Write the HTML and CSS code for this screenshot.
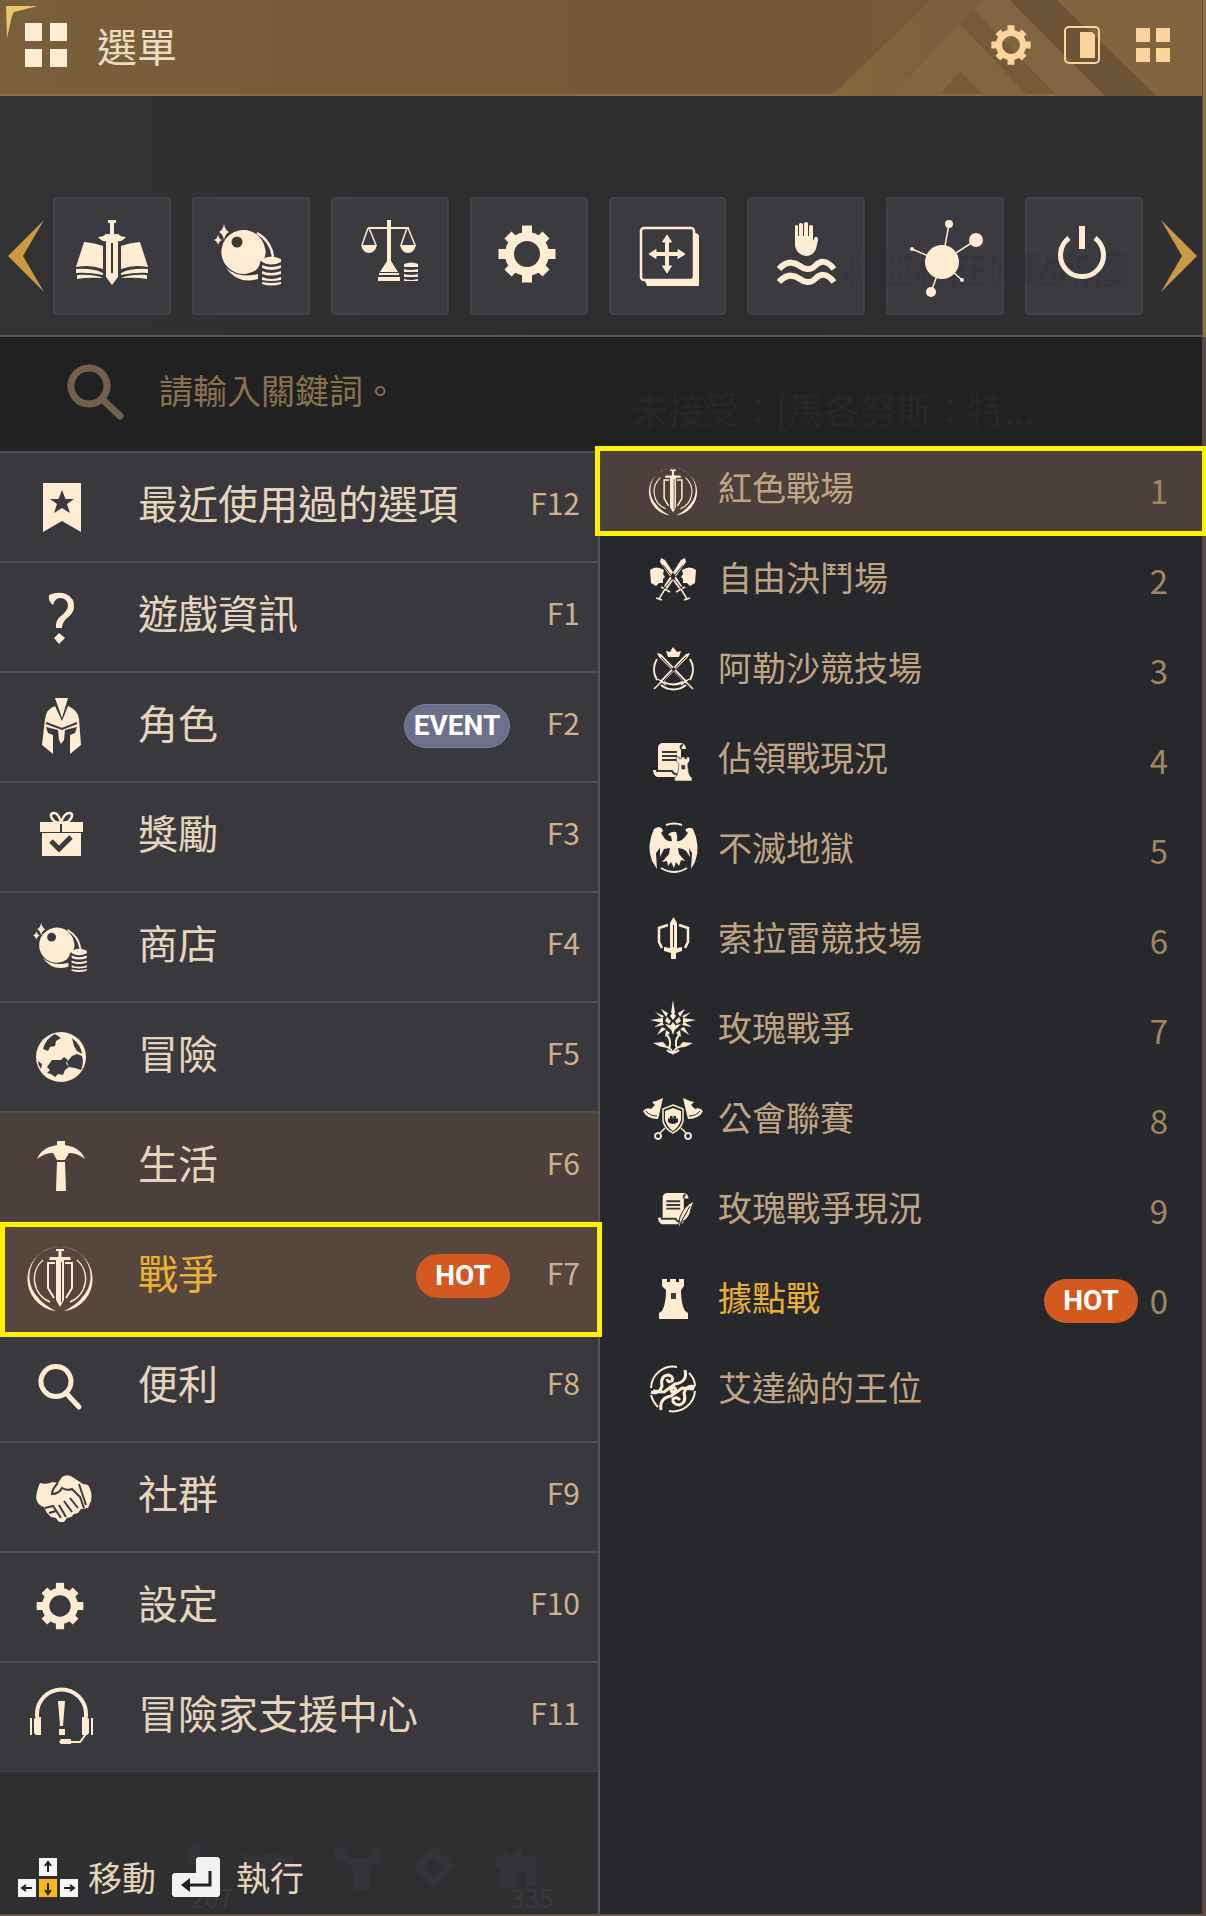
FILE: index.html
```html
<!doctype html>
<html lang="zh-Hant">
    <head>
        <meta charset="utf-8">
        <title>選單</title>
        <meta name="viewport" content="width=device-width, initial-scale=1">
        <link rel="stylesheet" href="styles.css">
    </head>
    <body>
        <svg class="defs" aria-hidden="true">
            <defs>
                <linearGradient id="BAND" x1="0" x2="1">
                    <stop offset="0%" stop-color="#8a6a3e"/>
                    <stop offset="60%" stop-color="#7a603c"/>
                </linearGradient>
                <g id="gear">
                    <circle r="17.5" fill="none" stroke="currentColor" stroke-width="9"/>
                    <path fill="none" stroke="currentColor" stroke-width="10" d="M0-28.5V-19M0 19V28.5M-28.5 0H-19M19 0H28.5M-19-19L-14-14M19-19L14-14M-19 19L-14 14M19 19L14 14"/>
                </g>
                <g id="orb">
                    <path d="M9 1Q10 7 14 9Q10 11 9 17Q8 11 4 9Q8 7 9 1ZM3 12Q4 16 7 17Q4 18 3 22Q2 18-1 17Q2 16 3 12Z"/>
                    <path d="M29.5 7A22 22 0 0 1 50 25Q52 32 48 37L45 39Q45 43 41 47A22 22 0 1 1 29.5 7Z"/>
                    <circle class="cut" cx="22" cy="19" r="5.5"/>
                    <path fill="none" stroke="currentColor" stroke-width="2.5" d="M42 10Q56 18 58 34"/>
                    <path d="M11 45Q24 56 43 51V56Q23 62 11 45Z"/>
                    <use href="#coins" x="47" y="34"/>
                </g>
                <g id="coins">
                    <path d="M0 2Q9-3 19 2V5Q9 10 0 5ZM0 8Q9 12 19 8V11Q9 15 0 11ZM0 14Q9 18 19 14V17Q9 20 0 17ZM0 20Q9 24 19 20V23Q9 25 0 23ZM0 25Q9 27 19 25V27Q9 30 0 27Z"/>
                </g>
                <g id="war">
                    <path d="M0-31A32.1 32.1 0 0 1 4 33Q17 27 24 17A29.5 29.5 0 0 0 0-31ZM0-31A32.1 32.1 0 0 0-4 33Q-17 27-24 17A29.5 29.5 0 0 1 0-31Z"/>
                    <path fill="none" stroke="currentColor" stroke-width="1.5" d="M17-18A25 25 0 0 1 10 24M-17-18A25 25 0 0 0-10 24"/>
                    <path fill="none" stroke="currentColor" stroke-width="2" d="M-5-15H-12V10L-6 20M5-15H12V10L6 20"/>
                    <path d="M-4-29H4V-27H1.5V-21H10L11-18H4V22L0 29L-4 22V-18H-11L-10-21H-1.5V-27H-4Z"/>
                    <path class="slot thin" d="M1.5-16V24"/>
                </g>
                <g id="tower">
                    <path d="M4 0H9V3H12V0H18V3H21V0H26V7L23 11Q23 25 27 32L30 34V40H1V34L4 32Q8 25 8 11L4 7Z"/>
                    <path class="cut" d="M13 14H18V20H13Z"/>
                </g>
                <g id="scroll">
                    <path d="M8 0H27Q32 1 32 6H27V30Q27 34 22 34H3Q-1 32-1 27H4V5Q4 1 8 0Z"/>
                    <path class="line" d="M8 9H23M8 13H23M8 17H23M2 28H18Q20 32 24 31M27 6Q26 2 29 2"/>
                </g>
                <g id="crossed">
                    <path d="M-12-22L-8-20L9 6L6 9L-13-18ZM12-22L8-20L-9 6L-6 9L13-18Z"/>
                    <path fill="none" stroke="currentColor" stroke-width="1.5" d="M3 12L12 7M8 9L14 19M11 20L17 18M-3 12L-12 7M-8 9L-14 19M-11 20L-17 18"/>
                </g>
            </defs>
        </svg>

        <main class="menu">
            <header class="bar">
                <svg class="chevrons" viewBox="0 0 403 96" preserveAspectRatio="xMaxYMin slice" aria-hidden="true">
                    <path fill="url(#BAND)" d="M33 96L131 0H185L175 10L92 96Z"/>
                    <path fill="#816642" d="M92 96L161 24L229 96H185L161 71L140 96Z"/>
                    <path fill="#806643" d="M175 10L185 0H211L306 96H258Z"/>
                    <path fill="#6c5436" d="M211 0H258L358 96H306Z"/>
                    <path fill="#80653f" d="M258 0H403V96H358Z"/>
                </svg>
                <svg class="corner" viewBox="0 0 34 34" aria-hidden="true"><path d="M0 0H32L8 6L6 10L1 32Z"/></svg>
                <svg class="logo" viewBox="0 0 42 44" aria-hidden="true"><path d="M0 0H17V18H0ZM25 0H42V18H25ZM0 26H17V44H0ZM25 26H42V44H25Z"/></svg>
                <h1>選單</h1>
                <div class="tools">
                    <button aria-label="設定"><svg viewBox="-29 -29 58 58"><use href="#gear"/></svg></button>
                    <button aria-label="面板"><svg viewBox="0 0 40 40"><rect x="3" y="2" width="34" height="36" rx="4" fill="none" stroke="currentColor" stroke-width="2"/><path d="M18 7H30L33 10V33H18Z"/></svg></button>
                    <button aria-label="方格"><svg viewBox="0 0 40 40"><path d="M3 3H17V17H3ZM23 3H37V17H23ZM3 23H17V37H3ZM23 23H37V37H23Z"/></svg></button>
                </div>
            </header>

            <section class="quick">
                <button class="arrow" aria-label="上一頁"><svg viewBox="0 0 36 72"><path d="M36 0L15 36L36 72L0 36Z"/></svg></button>
                <div class="tiles">
                    <button class="tile" aria-label="任務"><svg viewBox="0 0 80 80"><g transform="translate(3 3)">
                        <path d="M9 23Q20 24 28 27V50Q15 45 1 48ZM65 23Q54 24 46 27V50Q59 45 73 48ZM1 50Q18 49 28 54V56Q12 53 1 54ZM73 50Q56 49 46 54V56Q62 53 73 54ZM2 56Q18 55 28 59Q12 58 2 60ZM72 56Q56 55 46 59Q62 58 72 60Z"/>
                        <path d="M33 1H41V4H39V15H43Q46 18 51 18Q47 23 43 22V58L37 66L31 58V22Q27 23 23 18Q28 18 31 15H35V4H33Z"/>
                        <path class="slot" d="M37 24V54"/>
                    </g></svg></button>
                    <button class="tile" aria-label="珍珠商店"><svg viewBox="0 0 80 80"><use href="#orb" x="4" y="7"/></svg></button>
                    <button class="tile" aria-label="交易所"><svg viewBox="0 0 80 80"><g transform="translate(10 3)">
                        <path d="M27 1H31V8H49V10H31V42L38 53H20L27 42V10H8V8H27ZM19 54H39V56H19ZM18 58H40V62H18ZM1 26H17Q15 34 9 34Q3 34 1 26ZM40 26H56Q54 34 48 34Q42 34 40 26Z"/>
                        <path fill="none" stroke="currentColor" stroke-width="1.5" d="M8 9L2 26M9 9L16 26M47 9L41 26M48 9L55 26"/>
                        <path d="M44 45Q51 42 58 45V48H44ZM44 50Q51 52 58 50V53H44ZM44 55Q51 57 58 55V58H44ZM44 60Q51 62 58 60V62H44Z"/>
                    </g></svg></button>
                    <button class="tile" aria-label="設定"><svg viewBox="0 0 80 80"><use href="#gear" x="38" y="38"/></svg></button>
                    <button class="tile" aria-label="編輯介面"><svg viewBox="0 0 80 80"><g transform="translate(12 10)">
                        <rect x="2" y="2" width="53" height="52" rx="3" fill="none" stroke="currentColor" stroke-width="2.5"/>
                        <path d="M55 7H57L60 9V60H8L6 55H53Q55 55 55 53Z"/>
                        <path d="M26.5 26.5V16H23.5L28 9L32.5 16H29.5V26.5H39V23.5L46 28L39 32.5V29.5H29.5V40H32.5L28 47L23.5 40H26.5V29.5H17V32.5L10 28L17 23.5V26.5Z" stroke="currentColor"/>
                    </g></svg></button>
                    <button class="tile" aria-label="脫離"><svg viewBox="0 0 80 80"><g transform="translate(12 5)">
                        <path d="M17 5Q18.5 3 20 5V15H21V3Q23 1 25 3V15H26V2Q28 0 30 2V15H31V5Q33 3 35 5V20L37 16Q40 15 40 19L38 28Q35 35 28 35Q19 34 17 25Z"/>
                        <path fill="none" stroke="currentColor" stroke-width="6" d="M1 48C10 38 18 42 22 45S32 50 37 45 48 38 56 48M1 61C10 51 18 55 22 58S32 63 37 58 48 51 56 61"/>
                    </g></svg></button>
                    <button class="tile" aria-label="知識"><svg viewBox="0 0 80 80"><g transform="translate(4 3)">
                        <path fill="none" stroke="currentColor" stroke-width="1.5" d="M33 43L67 21M33 43L40 5M33 43L3 30M33 43L22 73M33 43L53 61"/>
                        <circle cx="33" cy="43" r="17"/><circle cx="67" cy="21" r="7"/><circle cx="40" cy="5" r="4"/><circle cx="3" cy="30" r="2"/><circle cx="22" cy="73" r="5"/><circle cx="53" cy="61" r="2"/>
                    </g></svg></button>
                    <button class="tile" aria-label="結束遊戲"><svg viewBox="0 0 80 80"><g transform="translate(13 9)">
                        <path fill="none" stroke="currentColor" stroke-width="5" d="M12 13A21.5 21.5 0 1 0 38 13"/>
                        <path d="M22 1H28V24H22Z"/>
                    </g></svg></button>
                </div>
                <button class="arrow" aria-label="下一頁"><svg viewBox="0 0 36 72"><path d="M0 0L21 36L0 72L36 36Z"/></svg></button>
                <span class="ghost ghost-place" aria-hidden="true">利亞村莊據點所屬</span>
            </section>

            <form class="search">
                <span class="ghost ghost-quest" aria-hidden="true">未接受：[馬各努斯：特...</span>
                <label for="keyword" aria-label="搜尋"><svg viewBox="0 0 56 56"><path fill="none" stroke="currentColor" stroke-width="7" stroke-linecap="round" d="M21 4A18 18 0 1 1 20.9 4M34 35L52 52"/></svg></label>
                <input id="keyword" type="text" placeholder="請輸入關鍵詞。">
            </form>

            <div class="columns">
                <nav class="left">
                    <ul class="groups">
                        <li><button class="group"><svg class="icon" viewBox="0 0 64 64"><path d="M15 9H53V58L34 47L15 58Z"/><path class="cut" d="M34 16L37.5 25H46L39 30L42 39L34 34L26 39L29 30L22 25H30.5Z"/></svg><span class="name">最近使用過的選項</span><kbd>F12</kbd></button></li>
                        <li><button class="group"><svg class="icon" viewBox="0 0 64 64"><path d="M21 11Q30 7 38 10Q47 14 46 24Q45 30 38 35Q34 39 34 44H28Q27 36 34 31Q40 26 40 21Q39 14 32 14Q27 14 25 21Q20 17 21 11ZM31 49L37 54L31 60L26 54Z"/></svg><span class="name">遊戲資訊</span><kbd>F1</kbd></button></li>
                        <li><button class="group"><svg class="icon" viewBox="0 0 64 64"><path d="M27 4H40L34 24ZM14 51L17 25Q18 15 27 12L34 27L40 12Q50 16 51 25L53 51L42 60V41L47 39L49 33L37 36L36 46L33 50L31 46L30 36L18 33L20 39L25 41V60Z"/><path class="line" d="M18 29L34 35L49 29"/></svg><span class="name">角色</span><b class="badge event">EVENT</b><kbd>F2</kbd></button></li>
                        <li><button class="group"><svg class="icon" viewBox="0 0 64 64"><path d="M12 18H55V28H12ZM14 29H53V52H14Z"/><path fill="none" stroke="currentColor" stroke-width="2.5" d="M33 19L27 18Q20 11 25 9Q30 8 33 18Q37 8 42 9Q47 11 40 18Z"/><path class="slot" d="M33 20V28"/><path class="line thick" d="M23 37L31 45L43 33"/></svg><span class="name">獎勵</span><kbd>F3</kbd></button></li>
                        <li><button class="group"><svg class="icon" viewBox="0 0 64 64"><g transform="translate(6 8) scale(.8)"><use href="#orb"/></g></svg><span class="name">商店</span><kbd>F4</kbd></button></li>
                        <li><button class="group"><svg class="icon" viewBox="0 0 64 64"><circle cx="33" cy="33" r="25"/><path class="cut" d="M27 10L33 14L28 17L27 22L22 23L20 27L15 25Q18 14 27 10ZM44 14Q53 21 54 30L49 27L46 22ZM33 36L36 33L40 36L38 39L41 43L37 46L35 51L30 50L27 53L23 50L19 49L22 46L19 43L24 36ZM39 38L44 32L49 30L54 32Q56 39 53 46L47 44L41 43ZM10 37L14 40L13 45Q10 41 10 37Z"/></svg><span class="name">冒險</span><kbd>F5</kbd></button></li>
                        <li><button class="group open"><svg class="icon" viewBox="0 0 64 64"><path d="M29 7H37V11L45 13Q54 17 57 25Q48 18 41 19L37 26H29L25 19Q18 18 9 25Q12 17 21 13L29 11ZM29 28H37L38 57H28Z"/></svg><span class="name">生活</span><kbd>F6</kbd></button></li>
                        <li><button class="group current"><svg class="icon" viewBox="0 0 64 64"><use href="#war" x="32" y="34"/></svg><span class="name">戰爭</span><b class="badge hot">HOT</b><kbd>F7</kbd></button></li>
                        <li><button class="group"><svg class="icon" viewBox="0 0 64 64"><path fill="none" stroke="currentColor" stroke-width="5" stroke-linecap="round" d="M28 12.5A15 15 0 1 1 27.9 12.5M38 39L51 53"/></svg><span class="name">便利</span><kbd>F8</kbd></button></li>
                        <li><button class="group"><svg class="icon" viewBox="0 0 64 64"><g transform="translate(0 -3)"><path d="M8 37Q9 28 12 22Q18 24 25 21L30 22L34 16Q40 12 46 17L55 23L60 24Q65 32 63 40L60 47L53 48L50 52L46 53L43 56L39 57L36 61L31 61L28 57L23 56L19 52L16 46Q10 45 8 37Z"/><path class="line" d="M30 22Q24 28 24 33Q31 33 34 27Q39 30 44 28L52 36L56 47M42 37L50 47M36 40L44 51M31 44L38 56M17 47L25 45L33 57M21 52L28 50M51 23L58 44"/></g></svg><span class="name">社群</span><kbd>F9</kbd></button></li>
                        <li><button class="group"><svg class="icon" viewBox="0 0 64 64"><g transform="translate(32 32) scale(.82)"><use href="#gear"/></g></svg><span class="name">設定</span><kbd>F10</kbd></button></li>
                        <li><button class="group"><svg class="icon" viewBox="0 0 64 64"><path fill="none" stroke="currentColor" stroke-width="4" d="M9 33V30A24.5 24.5 0 0 1 58 30V33"/><path fill="none" stroke="currentColor" stroke-width="2" d="M3 34V51M64 34V51M58 50L52 58H40"/><path d="M8 33H13V51H8L6 49V35ZM59 33H54V51H59L61 49V35ZM30 17H37L35 42H32ZM31 45H37V51H31ZM33 55H43V60H33L31 58Z"/></svg><span class="name">冒險家支援中心</span><kbd>F11</kbd></button></li>
                    </ul>
                    <footer class="hints">
                        <svg class="ghost-icons" viewBox="0 0 364 60" aria-hidden="true">
                            <path d="M8 20Q4 4 15 2Q26 6 18 16L26 28ZM66 22L60 10L74 16Q90 8 106 16L118 10L112 24Q110 36 90 36Q72 36 66 22ZM153 6L163 4L169 16H187L193 4L199 8L200 20L189 24V48H173V24L155 18ZM233 26L254 4L275 24L254 46ZM243 26L254 36L264 25L254 15ZM330 14Q318 2 324 14H316V26H320V46H336V30H346V44H356V14H342Q346 2 330 14Z"/>
                        </svg>
                        <span class="ghost ghost-a" aria-hidden="true">207</span>
                        <span class="ghost ghost-b" aria-hidden="true">335</span>
                        <svg class="arrows" viewBox="0 0 60 39" aria-hidden="true"><path fill="#f5f5f5" d="M21 0H39V18H21ZM0 21H18V39H0ZM42 21H60V39H42Z"/><path fill="#fcb817" d="M21 21H39V39H21Z"/><path fill="none" stroke="#222" stroke-width="2" d="M30 14V5M27 8L30 4L33 8M14 30H5M8 27L4 30L8 33M46 30H55M52 27L56 30L52 33M30 25V34M27 32L30 36L33 32"/></svg>
                        <span>移動</span>
                        <svg class="enter" viewBox="0 0 48 40" aria-hidden="true"><path fill="#f3f3f3" d="M26 0H46L48 2V38L46 40H2L0 38V18L2 16H24V2Z"/><path fill="none" stroke="#222" stroke-width="3" d="M38 14V28H14"/><path fill="#222" d="M18 21V35L9 28Z"/></svg>
                        <span>執行</span>
                    </footer>
                </nav>

                <ul class="entries">
                    <li><button class="entry selected"><svg class="icon" viewBox="0 0 64 64"><g transform="translate(32 32) scale(.74)"><use href="#war"/></g></svg><span class="name">紅色戰場</span><kbd>1</kbd></button></li>
                    <li><button class="entry"><svg class="icon" viewBox="0 0 64 64"><path d="M23 21Q15 16 9 21L10 34L15 37L18 34L22 34L22 30L24 28L22 25ZM41 21Q49 16 55 21L54 34L49 37L46 34L42 34L42 30L40 28L42 25Z"/><use href="#crossed" x="32" y="31"/><path class="line thin" d="M22 16L42 41M42 16L22 41"/></svg><span class="name">自由決鬥場</span><kbd>2</kbd></button></li>
                    <li><button class="entry"><svg class="icon" viewBox="0 0 64 64"><path fill="none" stroke="currentColor" stroke-width="2" d="M16 20A20 20 0 0 0 16 41M49 20A20 20 0 0 1 49 41M20 46A20 20 0 0 0 45 46M23 43Q32 48 42 43"/><path d="M25 12L29 13L32 8L36 13L40 12L38 18H27Z"/><path d="M16 14L20 15L46 42L44 44L18 18ZM49 14L45 15L19 42L21 44L47 18Z"/><path fill="none" stroke="currentColor" stroke-width="1.5" d="M40 46L48 40M45 43L52 50M25 46L17 40M20 43L13 50"/><path class="line thin" d="M20 18L43 42M45 18L22 42"/></svg><span class="name">阿勒沙競技場</span><kbd>3</kbd></button></li>
                    <li><button class="entry"><svg class="icon" viewBox="0 0 64 64"><use href="#scroll" x="13" y="14"/><g class="edge" transform="translate(33 28) scale(.6)"><use href="#tower"/></g></svg><span class="name">佔領戰現況</span><kbd>4</kbd></button></li>
                    <li><button class="entry"><svg class="icon" viewBox="0 0 64 64"><path d="M17 8Q21 8 22 12L20 14L24 20Q28 23 31 22L30 17L27 16Q30 12 35 13Q37 17 36 22Q40 23 43 19L47 14L44 11Q48 7 52 10Q60 27 54 43L50 50L51 34L48 29L49 38L45 32L42 30L37 29L38 35L44 42L40 41L38 47L35 43L33 49L30 43L27 47L26 42L21 43L28 35L29 29L23 30L19 38L19 29L15 34L16 50L11 42Q5 27 13 10Z"/><path fill="none" stroke="currentColor" stroke-width="2" d="M25 6Q33 3 41 6M20 49Q33 57 46 49"/></svg><span class="name">不滅地獄</span><kbd>5</kbd></button></li>
                    <li><button class="entry"><svg class="icon" viewBox="0 0 64 64"><path d="M32.5 8L36 14V39L41 38V42L35 44V50H30V44L23 42V38L29 39V14Z"/><path class="slot thin" d="M32.5 16V38"/><path fill="none" stroke="currentColor" stroke-width="2.5" d="M27 16L18 19V33L21 39M38 16L47 19V33L44 39"/></svg><span class="name">索拉雷競技場</span><kbd>6</kbd></button></li>
                    <li><button class="entry"><svg class="icon" viewBox="0 0 64 64"><path d="M32 1L34 14H30ZM9 21L22 19V24ZM55 21L42 19V24ZM20 10L27 14L25 18ZM44 10L37 14L39 18ZM14 13L23 17L21 19ZM50 13L41 17L43 19ZM13 28L21 23L23 26ZM51 28L43 23L41 26ZM16 36L21 28L25 30ZM48 36L43 28L39 30ZM24 38L25 31L29 34ZM40 38L39 31L35 34ZM32 13L35 17L32 21L29 17ZM26 18L30 22L28 25L24 22ZM38 18L34 22L36 25L40 22ZM24 25L29 26L30 31ZM40 25L35 26L34 31ZM32 23L35 27L32 36L29 27ZM12 44L22 43L25 46L20 48ZM52 44L42 43L39 46L44 48Z"/><path fill="none" stroke="currentColor" stroke-width="2" d="M26 36Q31 42 28 50M38 36Q33 42 36 50M21 47Q29 47 32 54Q35 47 43 47M26 51Q32 57 38 51"/></svg><span class="name">玫瑰戰爭</span><kbd>7</kbd></button></li>
                    <li><button class="entry"><svg class="icon" viewBox="0 0 64 64"><path d="M22 9L19 22L17 30Q6 30 2 22Q5 18 10 20L14 16L11 13L15 12ZM42 9L45 22L47 30Q58 30 62 22Q59 18 54 20L50 16L53 13L49 12ZM32 19L40 22V31Q38 38 32 42Q26 38 24 31V22Z"/><path class="line thin" d="M5 22Q9 27 16 27M59 22Q55 27 48 27"/><path fill="none" stroke="currentColor" stroke-width="1.5" d="M32 16L42 20V32Q40 40 32 44Q24 40 22 32V20ZM24 39L18 45M40 39L46 45"/><path fill="none" stroke="currentColor" stroke-width="2" d="M17 44A3 3 0 1 0 17.1 44M47 44A3 3 0 1 0 47.1 44"/><path class="cut" d="M27 29L29 30V27H31V30L32 26L33 30V27H35V30L37 29V33Q32 37 27 33Z"/></svg><span class="name">公會聯賽</span><kbd>8</kbd></button></li>
                    <li><button class="entry"><svg class="icon" viewBox="0 0 64 64"><g transform="translate(18 14) scale(.92)"><use href="#scroll"/></g><path class="edge" d="M53 22Q43 27 39 38L37 50L41 43Q49 39 50 30Z"/><path class="line thin" d="M49 27L39 45"/></svg><span class="name">玫瑰戰爭現況</span><kbd>9</kbd></button></li>
                    <li><button class="entry featured"><svg class="icon" viewBox="0 0 64 64"><use href="#tower" x="17" y="10"/></svg><span class="name">據點戰</span><b class="badge hot">HOT</b><kbd>0</kbd></button></li>
                    <li><button class="entry"><svg class="icon" viewBox="0 0 64 64"><g fill="none" stroke="currentColor" stroke-width="2"><path d="M36 8A22 22 0 0 0 10 29M28 52A22 22 0 0 0 54 32M48 14Q54 20 54 27M10 36Q12 43 17 48"/><path stroke-width="3" d="M10 33Q18 36 21 27Q19 17 27 16Q33 17 31 22Q27 24 26 20M54 28Q46 25 43 34Q46 44 38 46Q31 45 32 40Q36 37 39 41M44 11Q47 23 34 25L23 33L12 32M20 51Q18 39 30 37L41 29L53 30M32 28Q29 31 31 33Q36 33 34 29Z"/></g></svg><span class="name">艾達納的王位</span><kbd></kbd></button></li>
                </ul>
            </div>
        </main>
    </body>
</html>
```

FILE: styles.css
```css
* {
	box-sizing: border-box;
}
body {
	margin: 0;
	background: linear-gradient(#92733f 0, #92733f 337px, #5c4a40 337px);
	color: #e6d5bd;
	font-family: "Noto Sans CJK TC", "Noto Sans", sans-serif;
	font-weight: 400;
}
ul {
	list-style: none;
	margin: 0;
	padding: 0;
}
button {
	border: 0;
	padding: 0;
	background: none;
	color: inherit;
	font: inherit;
	text-align: left;
	cursor: pointer;
}
svg {
	display: block;
	fill: currentColor;
	overflow: visible;
}
.defs {
	position: absolute;
	width: 0;
	height: 0;
}
.cut {
	fill: #3a393d;
}
.slot, .line {
	fill: none;
	stroke: #3a393d;
	stroke-width: 2px;
}
.thin {
	stroke-width: 1px;
}
.thick {
	stroke-width: 5px;
}
.edge {
	stroke: #27282c;
	stroke-width: 1px;
}

.menu {
	display: flex;
	flex-direction: column;
	min-height: 100vh;
	margin-right: 3px;
	border-right: 1px solid #4d4b4c;
	border-bottom: 2px solid #6a5046;
	background: #2f2f31;
}

/* title bar */
.bar {
	position: relative;
	display: flex;
	align-items: center;
	height: 96px;
	padding: 0 29px 4px 25px;
	border-bottom: 2px solid #8d6d45;
	background: linear-gradient(90deg, #795f3a, #715937 60%, #775d39);
	color: #ffecd3;
}
.chevrons {
	position: absolute;
	top: 0;
	right: 0;
	width: 403px;
	height: 94px;
}
.corner {
	position: absolute;
	top: 6px;
	left: 6px;
	width: 34px;
	color: #e9c66d;
}
.logo {
	width: 42px;
	margin-right: 30px;
}
h1 {
	margin: 0;
	font-size: 40px;
	line-height: 60px;
	font-weight: 400;
	color: #eedbc1;
}
.tools {
	position: relative;
	display: flex;
	gap: 31px;
	margin-left: auto;
	color: #fbd59c;
}
.tools svg {
	width: 40px;
	height: 40px;
}

/* shortcut tiles */
.quick {
	position: relative;
	display: flex;
	align-items: center;
	gap: 9px;
	padding: 101px 5px 20px 8px;
	background: linear-gradient(90deg, #323234, #2c2c2f 55%, #303032);
	border-bottom: 2px solid #5f5a57;
}
.arrow {
	flex: none;
	color: #c99c43;
}
.arrow svg {
	width: 36px;
	height: 72px;
}
.tiles {
	flex: 1;
	display: grid;
	grid-template-columns: repeat(8, 1fr);
	gap: 21px;
	padding-right: 9px;
}
.tile {
	display: flex;
	align-items: center;
	justify-content: center;
	height: 118px;
	border: 2px solid #434346;
	border-radius: 4px;
	background: #3b3a3f;
	color: #ffecd3;
}
.tile svg {
	position: relative;
	z-index: 1;
	width: 80px;
	height: 80px;
}
.ghost {
	position: absolute;
	pointer-events: none;
}
.ghost-place {
	right: 72px;
	bottom: 40px;
	font-size: 36px;
	line-height: 54px;
	color: rgba(44, 44, 60, .3);
}

/* keyword search */
.search {
	position: relative;
	display: flex;
	align-items: center;
	gap: 35px;
	height: 114px;
	padding: 0 40px 4px 68px;
	background: #222122;
}
.search label {
	color: #71604b;
}
.search label svg {
	width: 56px;
	height: 56px;
}
.search input {
	flex: 1;
	min-width: 0;
	border: 0;
	padding: 0 0 4px;
	outline: none;
	background: none;
	color: #c0a585;
	font: inherit;
	font-size: 34px;
	line-height: 50px;
}
.search input::placeholder {
	color: #8a7251;
	opacity: 1;
}
.ghost-quest {
	right: 168px;
	bottom: 16px;
	font-size: 36px;
	line-height: 54px;
	color: #27272b;
}

.columns {
	flex: 1;
	display: grid;
	grid-template-columns: 600fr 602fr;
}
.icon {
	flex: none;
	width: 64px;
	height: 64px;
	color: #ffecd3;
}
.name {
	white-space: nowrap;
}
kbd {
	font-family: "Noto Sans CJK TC", sans-serif;
	text-align: right;
	color: #cdb18c;
}
.badge {
	height: 44px;
	border-radius: 22px;
	font-family: Roboto, sans-serif;
	font-size: 28px;
	line-height: 44px;
	font-weight: 700;
	text-align: center;
	color: #fff;
	margin-left: auto;
}
.event {
	width: 106px;
	line-height: 42px;
	border: 1px solid #7582a4;
	background: #6b6f89;
}
.hot {
	width: 94px;
	background: #d45921;
}

/* left column */
.left {
	display: flex;
	flex-direction: column;
	border-right: 2px solid #55545a;
}
.group {
	position: relative;
	display: flex;
	align-items: center;
	width: 100%;
	height: 110px;
	padding: 0 18px 2px 28px;
	border-top: 2px solid #4e4e54;
	background: #39393d;
	font-size: 40px;
	line-height: 60px;
}
.group .name {
	margin-left: 46px;
	padding-bottom: 8px;
}
.group kbd {
	width: 70px;
	margin-left: auto;
	padding-bottom: 8px;
	font-size: 30px;
}
.group .badge + kbd {
	margin-left: 0;
}
.open {
	border-top-color: #5f4c43;
	background: #4b403b;
}
.current {
	z-index: 1;
	background: #57463d;
	color: #e9b036;
}
.current .slot, .selected .slot {
	stroke: #57463d;
}
/* the marker frame spills over the neighbouring rows */
.current::after {
	content: "";
	position: absolute;
	inset: -1px -4px -6px 0;
	border: 5px solid #fff200;
}
.hints {
	position: relative;
	isolation: isolate;
	flex: 1;
	display: flex;
	align-items: center;
	padding: 68px 0 0 18px;
	border-top: 1px solid #434247;
	font-size: 34px;
	line-height: 50px;
}
.hints span {
	margin-left: 10px;
}
.arrows {
	width: 60px;
}
.enter {
	width: 48px;
	margin-left: 16px;
}
.enter + span {
	margin-left: 16px;
}
.ghost-icons {
	position: absolute;
	left: 180px;
	bottom: 12px;
	width: 364px;
	color: #343338;
	z-index: -1;
}
.hints .ghost {
	bottom: 0;
	margin: 0;
	font-size: 26px;
	line-height: 34px;
	color: #39383d;
	z-index: -1;
}
.ghost-a {
	left: 190px;
}
.ghost-b {
	left: 510px;
}

/* right column */
.entries {
	display: grid;
	align-content: start;
	gap: 10px;
	background: #27282c;
}
.entry {
	display: flex;
	align-items: center;
	width: 100%;
	height: 80px;
	padding: 0 34px 0 41px;
	font-size: 34px;
	line-height: 50px;
	color: #c0a585;
}
.entry .name {
	margin-left: 13px;
	padding-bottom: 8px;
}
.entry kbd {
	width: 30px;
	margin-left: auto;
	padding-bottom: 2px;
	font-size: 33px;
	color: #a08763;
}
.entry .badge + kbd {
	margin-left: 0;
}
.entry .cut {
	fill: #27282c;
}
.entry .line, .entry .slot {
	stroke: #27282c;
}
.selected {
	position: relative;
	background: #4b403b;
	outline: 5px solid #fff200;
}
.featured {
	color: #e9b036;
}
```
